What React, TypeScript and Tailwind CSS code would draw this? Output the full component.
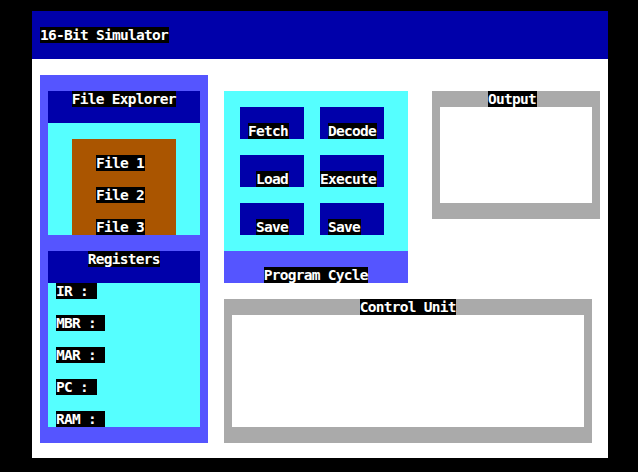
const font = { fontFamily: '"DejaVu Sans Mono", "Liberation Mono", monospace' };

function Label({ text, className = "" }: { text: string; className?: string }) {
  return (
    <span
      className={`block h-[16px] w-fit whitespace-pre bg-black pr-[0.7px] text-[14.5px] font-bold leading-[16px] tracking-[-0.73px] text-white ${className}`}
    >
      {text}
    </span>
  );
}

const steps = [
  { name: "Fetch", pad: "pl-[8px]" },
  { name: "Decode", pad: "pl-[8px]" },
  { name: "Load", pad: "pl-[16px]" },
  { name: "Execute", pad: "pl-0" },
  { name: "Save", pad: "pl-[16px]" },
  { name: "Save", pad: "pl-[8px]" },
];

const registers = ["IR : ", "MBR : ", "MAR : ", "PC : ", "RAM : "];

export default function App() {
  return (
    <div
      className="h-[472px] w-[638px] overflow-hidden bg-black pl-[32px] pt-[11px]"
      style={font}
    >
      <div className="flex h-[447px] w-[576px] flex-col bg-white">
        <header className="h-[48px] bg-[#0000AA] pl-[8px] pt-[16px]">
          <Label text="16-Bit Simulator" />
        </header>

        <div className="flex">
          {/* left column */}
          <aside className="ml-[8px] mt-[16px] flex h-[368px] w-[168px] flex-col bg-[#5555FF] px-[8px] pt-[16px]">
            <div className="flex h-[32px] justify-center bg-[#0000AA]">
              <Label text="File Explorer" />
            </div>
            <div className="h-[112px] bg-[#55FFFF] pl-[24px] pt-[16px]">
              <div className="flex h-[96px] w-[104px] flex-col gap-[16px] bg-[#AA5500] pl-[24px] pt-[16px]">
                <Label text="File 1" />
                <Label text="File 2" />
                <Label text="File 3" />
              </div>
            </div>

            <div className="mt-[16px] flex h-[32px] justify-center bg-[#0000AA]">
              <Label text="Registers" />
            </div>
            <div className="flex h-[144px] flex-col gap-[16px] bg-[#55FFFF] pl-[8px]">
              {registers.map((r) => (
                <Label key={r} text={r} />
              ))}
            </div>
          </aside>

          {/* right area */}
          <div className="ml-[16px] mt-[32px] flex flex-col">
            <div className="flex">
              <section className="flex w-[184px] flex-col">
                <div className="grid h-[160px] grid-cols-[64px_64px] grid-rows-[32px_32px_32px] content-start gap-[16px] bg-[#55FFFF] pl-[16px] pt-[16px]">
                  {steps.map((s, i) => (
                    <div key={i} className={`flex h-[32px] items-end bg-[#0000AA] ${s.pad}`}>
                      <Label text={s.name} />
                    </div>
                  ))}
                </div>
                <div className="flex h-[32px] items-end justify-center bg-[#5555FF]">
                  <Label text="Program Cycle" />
                </div>
              </section>

              <section className="ml-[24px] flex h-[128px] w-[168px] flex-col bg-[#AAAAAA] px-[8px]">
                <div className="h-[16px] pl-[48px]">
                  <Label text="Output" />
                </div>
                <div className="h-[96px] bg-white" />
              </section>
            </div>

            <section className="mt-[16px] flex h-[144px] w-[368px] flex-col bg-[#AAAAAA] px-[8px]">
              <div className="flex h-[16px] justify-center">
                <Label text="Control Unit" />
              </div>
              <div className="h-[112px] bg-white" />
            </section>
          </div>
        </div>
      </div>
    </div>
  );
}
